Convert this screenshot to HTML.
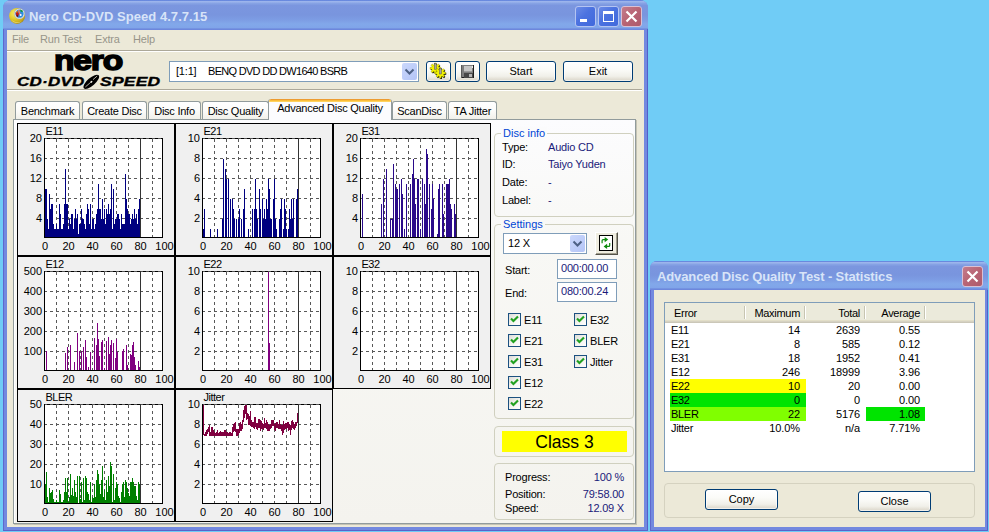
<!DOCTYPE html>
<html><head><meta charset="utf-8"><title>Nero CD-DVD Speed</title>
<style>
html,body{margin:0;padding:0}
body{width:989px;height:532px;overflow:hidden;background:#70ccf6;font-family:"Liberation Sans",sans-serif;font-size:11px;color:#000}
#root{position:relative;width:989px;height:532px;overflow:hidden;background:#70ccf6}
#root *{box-sizing:border-box}
.abs,.t,.ch{position:absolute}
.t{white-space:pre;line-height:13px;height:13px;letter-spacing:-.2px}
.ct{font-family:"Liberation Sans",sans-serif;font-size:11px;fill:#000}
/* windows */
.win{position:absolute;background:#7389df;border-radius:8px 8px 0 0;overflow:hidden}
.tb{position:absolute;left:0;top:0;right:0;height:30px;background:linear-gradient(#5f80dc 0,#6f8fe0 .8px,#9db5ec 1.400px,#96b0ea 2.200px,#86a2e4 3.500px,#7b96df 5.500px,#7995de 15px,#7d9de4 20px,#82a8ea 24px,#80a5e9 27.500px,#6f8add 29px,#6a84dc 30px)}
.ttl{position:absolute;font-family:"Liberation Sans",sans-serif;font-weight:bold;font-size:13px;color:#d8e4f8;white-space:pre;line-height:16px}
.cli{position:absolute;background:#ece9d8}
.cb{position:absolute;width:21px;height:21px;top:6px;border-radius:3px;border:1px solid #b4c4f2;background:linear-gradient(135deg,#6c8ce6 0,#4b72e0 45%,#4169dc 100%)}
.cb.x{background:linear-gradient(135deg,#c47c8c 0,#b86474 50%,#ae5a6c 100%);border-color:#d9c0d4}
.btn{position:absolute;border:1px solid #003c74;border-radius:3px;background:linear-gradient(#ffffff 0,#fbfbf8 40%,#f1f0e9 75%,#d9d4c7 100%);text-align:center;line-height:19px;font-size:11px;box-shadow:inset 0 0 0 1px rgba(255,255,255,.6)}
.tab{position:absolute;top:101px;height:19px;border:1px solid #919b9c;border-bottom:none;border-radius:3px 3px 0 0;background:linear-gradient(#ffffff 0,#fbfbf9 50%,#f0efe8 100%);text-align:center;line-height:19px;white-space:pre;letter-spacing:-.25px}
.grp{position:absolute;border:1px solid #d0d0bf;border-radius:4px}
.gl{position:absolute;color:#0046d5;background:#f6f5f0;padding:0 2px;white-space:pre;line-height:13px}
.fld{position:absolute;border:1px solid #7f9db9;background:#fff;color:#1a1a7a;white-space:pre}
.chk{position:absolute;width:13px;height:13px;border:1px solid #1c5180;background:linear-gradient(135deg,#dcdcd7 0,#f3f3ef 50%,#ffffff 100%)}
.chk svg{position:absolute;left:0;top:0}
.nv{color:#1a1a7a}
.hd{position:absolute;top:303px;height:20px;line-height:20px;white-space:pre;letter-spacing:-.3px}
.r{position:absolute;white-space:pre;line-height:14px;height:14px;text-align:right;letter-spacing:-.1px}
.l{position:absolute;white-space:pre;line-height:14px;height:14px;letter-spacing:-.3px}
</style></head>
<body>
<div id="root">

<!-- ================= MAIN WINDOW ================= -->
<div class="win" style="left:3px;top:0;width:645px;height:531px">
  <div class="tb"></div>
  <div class="abs" style="left:0;top:29px;width:1px;bottom:0;background:#6068cc"></div>
  <div class="abs" style="right:0;top:29px;width:1px;bottom:0;background:#5560c8"></div>
  <div class="abs" style="left:0;right:0;bottom:0;height:1px;background:#5a64ca"></div>
</div>
<!-- app icon -->
<svg class="abs" style="left:8px;top:7px" width="19" height="19" viewBox="0 0 19 19">
  <defs><radialGradient id="gd" cx="35%" cy="35%" r="70%"><stop offset="0" stop-color="#f6ee70"/><stop offset=".5" stop-color="#e2cc2c"/><stop offset=".85" stop-color="#c8aa1c"/><stop offset="1" stop-color="#a88c14"/></radialGradient></defs>
  <circle cx="9.100" cy="8.900" r="8" fill="url(#gd)"/>
  <path d="M3 12.500a7 7 0 0 0 11 1.500a9 9 0 0 1-11-1.500z" fill="#f0e498" opacity=".7"/>
  <circle cx="11.500" cy="6.700" r="4.700" fill="#2c8fe0" stroke="#e8e8ec" stroke-width="1.100"/>
  <circle cx="11.500" cy="6.700" r="5.300" fill="none" stroke="#9a9aa4" stroke-width=".4"/>
  <path d="M7.600 5.500L9.500 4l1.500 3-1 2.800-2-1.500z" fill="#c01818"/>
  <path d="M8.200 8.800l1.200-1 1 1.500-1 .8z" fill="#701010"/>
  <path d="M12 2.600l2.500.8.500 1.200-2 .3z" fill="#1c9a30"/>
  <path d="M10 3.200l1.200-.4L12.600 7l-1.200.5z" fill="#ff7a48"/>
  <path d="M8 5l.8-.8.800.6-.6.900z" fill="#ffd820"/>
  <circle cx="12.700" cy="7.900" r="1" fill="#fff"/>
</svg>
<div class="ttl" style="left:29px;top:9px;letter-spacing:.05px">Nero CD-DVD Speed 4.7.7.15</div>
<div class="cb" style="left:575px"><div class="abs" style="left:4px;top:12px;width:7px;height:3px;background:#fff"></div></div>
<div class="cb" style="left:598px"><div class="abs" style="left:4px;top:4px;width:11px;height:11px;border:1px solid #fff;border-top-width:3px"></div></div>
<div class="cb x" style="left:621px"><svg width="19" height="19" viewBox="0 0 19 19" class="abs" style="left:0;top:0"><path d="M4.5 4.5l10 10M14.5 4.5l-10 10" stroke="#fff" stroke-width="2.2" fill="none"/></svg></div>

<div class="cli" style="left:7px;top:30px;width:637px;height:497px"></div>
<!-- menu -->
<div class="t" style="left:12px;top:33px;color:#97958a">File</div>
<div class="t" style="left:40px;top:33px;color:#97958a">Run Test</div>
<div class="t" style="left:95px;top:33px;color:#97958a">Extra</div>
<div class="t" style="left:133px;top:33px;color:#97958a">Help</div>
<div class="abs" style="left:7px;top:50px;width:635px;height:1px;background:#aca899"></div>
<div class="abs" style="left:7px;top:51px;width:635px;height:1px;background:#fff"></div>
<div class="abs" style="left:7px;top:89px;width:635px;height:1px;background:#aca899"></div>
<div class="abs" style="left:7px;top:90px;width:635px;height:1px;background:#fff"></div>

<!-- logo -->
<div id="nero" class="abs" style="left:54px;top:46px;font-weight:bold;font-size:28px;line-height:30px;letter-spacing:-1px;-webkit-text-stroke:1.5px #000;white-space:pre;transform-origin:0 0;transform:scaleX(1.2)">nero</div>
<div class="abs" style="left:17px;top:76px;font-weight:bold;font-style:italic;font-size:12px;line-height:12px;white-space:pre;transform-origin:0 0;transform:scaleX(1.41);letter-spacing:.2px;-webkit-text-stroke:.35px #000">CD·DVD</div>
<svg class="abs" style="left:82px;top:74px" width="18" height="16" viewBox="0 0 18 16"><g transform="rotate(-41 9.300 7.800)"><ellipse cx="9.300" cy="7.800" rx="9.800" ry="3.900" fill="#000"/><ellipse cx="9.300" cy="7.800" rx="1.300" ry=".8" fill="#f4f2e6"/><path d="M1.500 7.800H7.500M12 7.300H17.500" stroke="#ece9d8" stroke-width=".7"/></g></svg>
<div class="abs" style="left:100px;top:76px;font-weight:bold;font-style:italic;font-size:12px;line-height:12px;white-space:pre;transform-origin:0 0;transform:scaleX(1.45);letter-spacing:.2px;-webkit-text-stroke:.35px #000">SPEED</div>

<!-- drive combo -->
<div class="fld" style="left:169px;top:61px;width:250px;height:21px;color:#000"></div>
<div class="t" style="left:176px;top:65px">[1:1]</div>
<div class="t" style="left:208px;top:65px;letter-spacing:-.7px">BENQ DVD DD DW1640 BSRB</div>
<div class="abs" style="left:402px;top:63px;width:15px;height:17px;border-radius:2px;background:linear-gradient(135deg,#cbd8fc,#b3c4f6)"><svg width="15" height="17" viewBox="0 0 15 17" class="abs" style="left:0;top:0"><path d="M3.5 6.5l4 4 4-4" stroke="#4d6185" stroke-width="2" fill="none"/></svg></div>
<!-- toolbar buttons -->
<div class="btn" style="left:426px;top:61px;width:25px;height:21px">
 <svg width="23" height="19" viewBox="0 0 23 19" class="abs" style="left:0;top:0">
  <path d="M11.86 5.29 L13.52 5.37 L13.52 7.23 L11.86 7.31 L11.53 8.10 L12.65 9.33 L11.33 10.65 L10.10 9.53 L9.31 9.86 L9.23 11.52 L7.37 11.52 L7.29 9.86 L6.50 9.53 L5.27 10.65 L3.95 9.33 L5.07 8.10 L4.74 7.31 L3.08 7.23 L3.08 5.37 L4.74 5.29 L5.07 4.50 L3.95 3.27 L5.27 1.95 L6.50 3.07 L7.29 2.74 L7.37 1.08 L9.23 1.08 L9.31 2.74 L10.10 3.07 L11.33 1.95 L12.65 3.27 L11.53 4.50Z" fill="#000" transform="translate(.7 .8)"/><path d="M11.86 5.29 L13.52 5.37 L13.52 7.23 L11.86 7.31 L11.53 8.10 L12.65 9.33 L11.33 10.65 L10.10 9.53 L9.31 9.86 L9.23 11.52 L7.37 11.52 L7.29 9.86 L6.50 9.53 L5.27 10.65 L3.95 9.33 L5.07 8.10 L4.74 7.31 L3.08 7.23 L3.08 5.37 L4.74 5.29 L5.07 4.50 L3.95 3.27 L5.27 1.95 L6.50 3.07 L7.29 2.74 L7.37 1.08 L9.23 1.08 L9.31 2.74 L10.10 3.07 L11.33 1.95 L12.65 3.27 L11.53 4.50Z" fill="#f2f200" stroke="#8a8a00" stroke-width=".4"/>
  <rect x="7.5" y="1.600" width="1.800" height="5.600" fill="#a4a4a4" stroke="#505050" stroke-width=".5"/>
  <path d="M16.86 9.99 L18.52 10.07 L18.52 11.93 L16.86 12.01 L16.53 12.80 L17.65 14.03 L16.33 15.35 L15.10 14.23 L14.31 14.56 L14.23 16.22 L12.37 16.22 L12.29 14.56 L11.50 14.23 L10.27 15.35 L8.95 14.03 L10.07 12.80 L9.74 12.01 L8.08 11.93 L8.08 10.07 L9.74 9.99 L10.07 9.20 L8.95 7.97 L10.27 6.65 L11.50 7.77 L12.29 7.44 L12.37 5.78 L14.23 5.78 L14.31 7.44 L15.10 7.77 L16.33 6.65 L17.65 7.97 L16.53 9.20Z" fill="#000" transform="translate(.7 .8)"/><path d="M16.86 9.99 L18.52 10.07 L18.52 11.93 L16.86 12.01 L16.53 12.80 L17.65 14.03 L16.33 15.35 L15.10 14.23 L14.31 14.56 L14.23 16.22 L12.37 16.22 L12.29 14.56 L11.50 14.23 L10.27 15.35 L8.95 14.03 L10.07 12.80 L9.74 12.01 L8.08 11.93 L8.08 10.07 L9.74 9.99 L10.07 9.20 L8.95 7.97 L10.27 6.65 L11.50 7.77 L12.29 7.44 L12.37 5.78 L14.23 5.78 L14.31 7.44 L15.10 7.77 L16.33 6.65 L17.65 7.97 L16.53 9.20Z" fill="#f2f200" stroke="#8a8a00" stroke-width=".4"/>
  <rect x="12.500" y="6.400" width="1.800" height="5.600" fill="#a4a4a4" stroke="#505050" stroke-width=".5"/>
 </svg>
</div>
<div class="btn" style="left:455px;top:61px;width:25px;height:21px">
 <svg width="23" height="19" viewBox="0 0 23 19" class="abs" style="left:0;top:0" shape-rendering="crispEdges">
  <rect x="5" y="3" width="13" height="13" fill="#7e7e7e"/><path d="M17.500 3V15.500H5.500" stroke="#1c1c1c" fill="none"/><path d="M5.500 3V16" stroke="#5a5a5a" fill="none"/>
  <rect x="8" y="4" width="7.500" height="5" fill="#c6c6c6"/><rect x="8" y="9" width="7.500" height="1" fill="#9a9a9a"/>
  <rect x="8" y="11" width="9" height="4.500" fill="#484848"/><rect x="13" y="12" width="2.500" height="3" fill="#b4b4b4"/><rect x="16" y="4" width="1" height="1.500" fill="#f0f0f0"/>
 </svg>
</div>
<div class="btn" style="left:486px;top:61px;width:70px;height:21px">Start</div>
<div class="btn" style="left:563px;top:61px;width:70px;height:21px">Exit</div>

<!-- tabs -->
<div class="tab" style="left:15px;width:65px">Benchmark</div>
<div class="tab" style="left:82px;width:65px">Create Disc</div>
<div class="tab" style="left:148px;width:53px">Disc Info</div>
<div class="tab" style="left:202px;width:67px">Disc Quality</div>
<div class="tab" style="left:392px;width:55px">ScanDisc</div>
<div class="tab" style="left:448px;width:49px">TA Jitter</div>
<!-- tab page -->
<div class="abs" style="left:13px;top:119px;width:623px;height:405px;border:1px solid #919b9c;background:linear-gradient(#fcfcfe 0,#f8f8f5 30%,#f4f3ee 100%);box-shadow:1px 1px 0 #c5c3b4, inset 1px 0 0 #fff"></div>
<div class="tab" style="left:268px;width:124px;top:99px;height:21px;border-top:none;background:#fcfcfe;line-height:19px;overflow:hidden"><div class="abs" style="left:-1px;right:-1px;top:0;height:3px;background:linear-gradient(#e68b2c 0,#ffc73c 60%,#ffdc78 100%);border-radius:3px 3px 0 0"></div>Advanced Disc Quality</div>

<svg class="ch" style="left:17px;top:123px" width="158" height="133" viewBox="0 0 158 133" shape-rendering="crispEdges">
<rect x="0.5" y="0.5" width="157" height="132" fill="#f0f0f0" stroke="#000"/>
<rect x="27" y="15" width="119" height="100" fill="#fff"/>
<path d="M39.5 16V114 M51.5 16V114 M63.5 16V114 M75.5 16V114 M87.5 16V114 M99.5 16V114 M111.5 16V114 M135.5 16V114" stroke="#585858" stroke-dasharray="3 3" fill="none"/>
<path d="M27 35.5H145 M27 55.5H145 M27 75.5H145 M27 95.5H145" stroke="#585858" stroke-dasharray="3 3" fill="none"/>
<path d="M28 66h1V115h-1zM29 66h1V115h-1zM30 96h1V115h-1zM31 106h1V115h-1zM32 71h1V115h-1zM33 86h1V115h-1zM34 81h1V115h-1zM35 81h1V115h-1zM36 101h1V115h-1zM37 106h1V115h-1zM38 106h1V115h-1zM39 101h1V115h-1zM40 106h1V115h-1zM41 106h1V115h-1zM42 81h1V115h-1zM43 91h1V115h-1zM44 106h1V115h-1zM45 106h1V115h-1zM46 101h1V115h-1zM47 81h1V115h-1zM48 46h1V115h-1zM49 81h1V115h-1zM50 81h1V115h-1zM51 106h1V115h-1zM52 96h1V115h-1zM53 101h1V115h-1zM54 91h1V115h-1zM55 91h1V115h-1zM56 106h1V115h-1zM57 96h1V115h-1zM58 86h1V115h-1zM59 96h1V115h-1zM60 91h1V115h-1zM61 111h1V115h-1zM62 101h1V115h-1zM63 101h1V115h-1zM64 86h1V115h-1zM65 96h1V115h-1zM66 96h1V115h-1zM67 101h1V115h-1zM68 106h1V115h-1zM69 91h1V115h-1zM70 81h1V115h-1zM71 86h1V115h-1zM72 101h1V115h-1zM73 81h1V115h-1zM74 106h1V115h-1zM75 96h1V115h-1zM76 96h1V115h-1zM77 106h1V115h-1zM78 101h1V115h-1zM79 91h1V115h-1zM80 86h1V115h-1zM81 61h1V115h-1zM82 86h1V115h-1zM83 86h1V115h-1zM84 96h1V115h-1zM85 76h1V115h-1zM86 96h1V115h-1zM87 86h1V115h-1zM88 101h1V115h-1zM89 86h1V115h-1zM90 91h1V115h-1zM91 81h1V115h-1zM92 91h1V115h-1zM93 86h1V115h-1zM94 61h1V115h-1zM95 106h1V115h-1zM96 66h1V115h-1zM97 101h1V115h-1zM98 96h1V115h-1zM99 96h1V115h-1zM100 91h1V115h-1zM101 91h1V115h-1zM102 96h1V115h-1zM103 106h1V115h-1zM104 91h1V115h-1zM105 101h1V115h-1zM106 101h1V115h-1zM107 101h1V115h-1zM108 51h1V115h-1zM109 76h1V115h-1zM110 86h1V115h-1zM111 91h1V115h-1zM112 91h1V115h-1zM113 101h1V115h-1zM114 96h1V115h-1zM115 91h1V115h-1zM116 96h1V115h-1zM117 86h1V115h-1zM118 96h1V115h-1zM119 91h1V115h-1zM120 101h1V115h-1zM121 86h1V115h-1zM122 76h1V115h-1zM123 76h1V115h-1z" fill="#000080"/>
<path d="M27.5 15V115M145.5 15V115M27 114.5H146" stroke="#000" fill="none"/>
<path d="M27 15.5H146" stroke="#000" fill="none"/><path d="M27 15.5H145" stroke="#555" stroke-dasharray="3 3" fill="none"/><path d="M27 15.5H28" stroke="#000" fill="none"/>
<path d="M123.5 15V114" stroke="#333" fill="none"/>
<text x="28.5" y="12" class="ct" letter-spacing="-.5">E11</text>
<text x="25" y="19" text-anchor="end" class="ct">20</text>
<text x="25" y="39" text-anchor="end" class="ct">16</text>
<text x="25" y="59" text-anchor="end" class="ct">12</text>
<text x="25" y="79" text-anchor="end" class="ct">8</text>
<text x="25" y="99" text-anchor="end" class="ct">4</text>
<text x="28.0" y="127" text-anchor="middle" class="ct">0</text>
<text x="51.5" y="127" text-anchor="middle" class="ct">20</text>
<text x="75.5" y="127" text-anchor="middle" class="ct">40</text>
<text x="99.5" y="127" text-anchor="middle" class="ct">60</text>
<text x="123.5" y="127" text-anchor="middle" class="ct">80</text>
<text x="147.5" y="127" text-anchor="middle" class="ct">100</text>
</svg>
<svg class="ch" style="left:175px;top:123px" width="158" height="133" viewBox="0 0 158 133" shape-rendering="crispEdges">
<rect x="0.5" y="0.5" width="157" height="132" fill="#f0f0f0" stroke="#000"/>
<rect x="27" y="15" width="119" height="100" fill="#fff"/>
<path d="M39.5 16V114 M51.5 16V114 M63.5 16V114 M75.5 16V114 M87.5 16V114 M99.5 16V114 M111.5 16V114 M135.5 16V114" stroke="#585858" stroke-dasharray="3 3" fill="none"/>
<path d="M27 35.5H145 M27 55.5H145 M27 75.5H145 M27 95.5H145" stroke="#585858" stroke-dasharray="3 3" fill="none"/>
<path d="M28 106h1V115h-1zM29 86h1V115h-1zM35 106h1V115h-1zM42 106h1V115h-1zM47 96h1V115h-1zM48 36h1V115h-1zM50 46h1V115h-1zM51 56h1V115h-1zM53 56h1V115h-1zM55 76h1V115h-1zM57 76h1V115h-1zM58 86h1V115h-1zM59 96h1V115h-1zM61 96h1V115h-1zM63 96h1V115h-1zM64 86h1V115h-1zM66 96h1V115h-1zM68 86h1V115h-1zM69 66h1V115h-1zM73 106h1V115h-1zM77 86h1V115h-1zM79 86h1V115h-1zM80 56h1V115h-1zM81 86h1V115h-1zM82 96h1V115h-1zM84 66h1V115h-1zM85 86h1V115h-1zM87 76h1V115h-1zM88 96h1V115h-1zM89 86h1V115h-1zM90 96h1V115h-1zM91 76h1V115h-1zM92 86h1V115h-1zM93 56h1V115h-1zM94 66h1V115h-1zM95 96h1V115h-1zM96 96h1V115h-1zM98 76h1V115h-1zM99 56h1V115h-1zM100 96h1V115h-1zM101 106h1V115h-1zM104 96h1V115h-1zM105 86h1V115h-1zM106 76h1V115h-1zM108 106h1V115h-1zM109 76h1V115h-1zM110 86h1V115h-1zM111 106h1V115h-1zM113 106h1V115h-1zM114 86h1V115h-1zM115 96h1V115h-1zM116 76h1V115h-1zM117 96h1V115h-1zM118 76h1V115h-1zM121 76h1V115h-1zM122 66h1V115h-1zM123 106h1V115h-1z" fill="#000080"/>
<path d="M27.5 15V115M145.5 15V115M27 114.5H146" stroke="#000" fill="none"/>
<path d="M27 15.5H146" stroke="#000" fill="none"/><path d="M27 15.5H145" stroke="#555" stroke-dasharray="3 3" fill="none"/><path d="M27 15.5H28" stroke="#000" fill="none"/>
<path d="M123.5 15V114" stroke="#333" fill="none"/>
<text x="28.5" y="12" class="ct" letter-spacing="-.5">E21</text>
<text x="25" y="19" text-anchor="end" class="ct">10</text>
<text x="25" y="39" text-anchor="end" class="ct">8</text>
<text x="25" y="59" text-anchor="end" class="ct">6</text>
<text x="25" y="79" text-anchor="end" class="ct">4</text>
<text x="25" y="99" text-anchor="end" class="ct">2</text>
<text x="28.0" y="127" text-anchor="middle" class="ct">0</text>
<text x="51.5" y="127" text-anchor="middle" class="ct">20</text>
<text x="75.5" y="127" text-anchor="middle" class="ct">40</text>
<text x="99.5" y="127" text-anchor="middle" class="ct">60</text>
<text x="123.5" y="127" text-anchor="middle" class="ct">80</text>
<text x="147.5" y="127" text-anchor="middle" class="ct">100</text>
</svg>
<svg class="ch" style="left:333px;top:123px" width="158" height="133" viewBox="0 0 158 133" shape-rendering="crispEdges">
<rect x="0.5" y="0.5" width="157" height="132" fill="#f0f0f0" stroke="#000"/>
<rect x="27" y="15" width="119" height="100" fill="#fff"/>
<path d="M39.5 16V114 M51.5 16V114 M63.5 16V114 M75.5 16V114 M87.5 16V114 M99.5 16V114 M111.5 16V114 M135.5 16V114" stroke="#585858" stroke-dasharray="3 3" fill="none"/>
<path d="M27 35.5H145 M27 55.5H145 M27 75.5H145 M27 95.5H145" stroke="#585858" stroke-dasharray="3 3" fill="none"/>
<path d="M29 71h1V115h-1zM48 81h1V115h-1zM50 56h1V115h-1zM53 46h1V115h-1zM57 96h1V115h-1zM59 96h1V115h-1zM60 41h1V115h-1zM62 61h1V115h-1zM63 66h1V115h-1zM64 66h1V115h-1zM66 61h1V115h-1zM68 56h1V115h-1zM69 71h1V115h-1zM71 106h1V115h-1zM73 61h1V115h-1zM77 61h1V115h-1zM79 51h1V115h-1zM80 36h1V115h-1zM81 56h1V115h-1zM82 81h1V115h-1zM84 56h1V115h-1zM85 56h1V115h-1zM87 106h1V115h-1zM89 56h1V115h-1zM91 61h1V115h-1zM92 81h1V115h-1zM93 26h1V115h-1zM94 31h1V115h-1zM96 61h1V115h-1zM98 86h1V115h-1zM99 61h1V115h-1zM100 76h1V115h-1zM104 111h1V115h-1zM105 66h1V115h-1zM106 61h1V115h-1zM109 61h1V115h-1zM110 91h1V115h-1zM113 61h1V115h-1zM114 61h1V115h-1zM115 61h1V115h-1zM116 56h1V115h-1zM117 81h1V115h-1zM118 86h1V115h-1zM121 81h1V115h-1zM122 91h1V115h-1zM57 96h3v1h-3z" fill="#2a0a8a"/>
<path d="M27.5 15V115M145.5 15V115M27 114.5H146" stroke="#000" fill="none"/>
<path d="M27 15.5H146" stroke="#000" fill="none"/><path d="M27 15.5H145" stroke="#555" stroke-dasharray="3 3" fill="none"/><path d="M27 15.5H28" stroke="#000" fill="none"/>
<path d="M123.5 15V114" stroke="#333" fill="none"/>
<text x="28.5" y="12" class="ct" letter-spacing="-.5">E31</text>
<text x="25" y="19" text-anchor="end" class="ct">20</text>
<text x="25" y="39" text-anchor="end" class="ct">16</text>
<text x="25" y="59" text-anchor="end" class="ct">12</text>
<text x="25" y="79" text-anchor="end" class="ct">8</text>
<text x="25" y="99" text-anchor="end" class="ct">4</text>
<text x="28.0" y="127" text-anchor="middle" class="ct">0</text>
<text x="51.5" y="127" text-anchor="middle" class="ct">20</text>
<text x="75.5" y="127" text-anchor="middle" class="ct">40</text>
<text x="99.5" y="127" text-anchor="middle" class="ct">60</text>
<text x="123.5" y="127" text-anchor="middle" class="ct">80</text>
<text x="147.5" y="127" text-anchor="middle" class="ct">100</text>
</svg>
<svg class="ch" style="left:17px;top:256px" width="158" height="133" viewBox="0 0 158 133" shape-rendering="crispEdges">
<rect x="0.5" y="0.5" width="157" height="132" fill="#f0f0f0" stroke="#000"/>
<rect x="27" y="15" width="119" height="100" fill="#fff"/>
<path d="M39.5 16V114 M51.5 16V114 M63.5 16V114 M75.5 16V114 M87.5 16V114 M99.5 16V114 M111.5 16V114 M135.5 16V114" stroke="#585858" stroke-dasharray="3 3" fill="none"/>
<path d="M27 35.5H145 M27 55.5H145 M27 75.5H145 M27 95.5H145" stroke="#585858" stroke-dasharray="3 3" fill="none"/>
<path d="M29 95h1V115h-1zM48 97h1V115h-1zM50 91h1V115h-1zM53 89h1V115h-1zM57 106h1V115h-1zM60 77h1V115h-1zM62 95h1V115h-1zM64 95h1V115h-1zM66 91h1V115h-1zM68 84h1V115h-1zM69 101h1V115h-1zM71 111h1V115h-1zM73 96h1V115h-1zM77 82h1V115h-1zM79 89h1V115h-1zM80 67h1V115h-1zM81 83h1V115h-1zM82 100h1V115h-1zM84 86h1V115h-1zM85 84h1V115h-1zM87 112h1V115h-1zM89 85h1V115h-1zM91 81h1V115h-1zM92 98h1V115h-1zM93 89h1V115h-1zM94 84h1V115h-1zM96 87h1V115h-1zM98 102h1V115h-1zM99 83h1V115h-1zM100 96h1V115h-1zM105 95h1V115h-1zM106 93h1V115h-1zM109 89h1V115h-1zM110 109h1V115h-1zM113 98h1V115h-1zM114 99h1V115h-1zM115 89h1V115h-1zM116 86h1V115h-1zM117 101h1V115h-1zM118 109h1V115h-1zM121 105h1V115h-1zM122 111h1V115h-1z" fill="#800080"/>
<path d="M27.5 15V115M145.5 15V115M27 114.5H146" stroke="#000" fill="none"/>
<path d="M27 15.5H146" stroke="#000" fill="none"/><path d="M27 15.5H145" stroke="#555" stroke-dasharray="3 3" fill="none"/><path d="M27 15.5H28" stroke="#000" fill="none"/>
<path d="M123.5 15V114" stroke="#333" fill="none"/>
<text x="28.5" y="12" class="ct" letter-spacing="-.5">E12</text>
<text x="25" y="19" text-anchor="end" class="ct">500</text>
<text x="25" y="39" text-anchor="end" class="ct">400</text>
<text x="25" y="59" text-anchor="end" class="ct">300</text>
<text x="25" y="79" text-anchor="end" class="ct">200</text>
<text x="25" y="99" text-anchor="end" class="ct">100</text>
<text x="28.0" y="127" text-anchor="middle" class="ct">0</text>
<text x="51.5" y="127" text-anchor="middle" class="ct">20</text>
<text x="75.5" y="127" text-anchor="middle" class="ct">40</text>
<text x="99.5" y="127" text-anchor="middle" class="ct">60</text>
<text x="123.5" y="127" text-anchor="middle" class="ct">80</text>
<text x="147.5" y="127" text-anchor="middle" class="ct">100</text>
</svg>
<svg class="ch" style="left:175px;top:256px" width="158" height="133" viewBox="0 0 158 133" shape-rendering="crispEdges">
<rect x="0.5" y="0.5" width="157" height="132" fill="#f0f0f0" stroke="#000"/>
<rect x="27" y="15" width="119" height="100" fill="#fff"/>
<path d="M39.5 16V114 M51.5 16V114 M63.5 16V114 M75.5 16V114 M87.5 16V114 M99.5 16V114 M111.5 16V114 M135.5 16V114" stroke="#585858" stroke-dasharray="3 3" fill="none"/>
<path d="M27 35.5H145 M27 55.5H145 M27 75.5H145 M27 95.5H145" stroke="#585858" stroke-dasharray="3 3" fill="none"/>
<path d="M93 15h1V115h-1zM94 87h1V115h-1z" fill="#800080"/>
<path d="M27.5 15V115M145.5 15V115M27 114.5H146" stroke="#000" fill="none"/>
<path d="M27 15.5H146" stroke="#000" fill="none"/><path d="M27 15.5H145" stroke="#555" stroke-dasharray="3 3" fill="none"/><path d="M27 15.5H28" stroke="#000" fill="none"/>
<path d="M123.5 15V114" stroke="#333" fill="none"/>
<text x="28.5" y="12" class="ct" letter-spacing="-.5">E22</text>
<text x="25" y="19" text-anchor="end" class="ct">10</text>
<text x="25" y="39" text-anchor="end" class="ct">8</text>
<text x="25" y="59" text-anchor="end" class="ct">6</text>
<text x="25" y="79" text-anchor="end" class="ct">4</text>
<text x="25" y="99" text-anchor="end" class="ct">2</text>
<text x="28.0" y="127" text-anchor="middle" class="ct">0</text>
<text x="51.5" y="127" text-anchor="middle" class="ct">20</text>
<text x="75.5" y="127" text-anchor="middle" class="ct">40</text>
<text x="99.5" y="127" text-anchor="middle" class="ct">60</text>
<text x="123.5" y="127" text-anchor="middle" class="ct">80</text>
<text x="147.5" y="127" text-anchor="middle" class="ct">100</text>
</svg>
<svg class="ch" style="left:333px;top:256px" width="158" height="133" viewBox="0 0 158 133" shape-rendering="crispEdges">
<rect x="0.5" y="0.5" width="157" height="132" fill="#f0f0f0" stroke="#000"/>
<rect x="27" y="15" width="119" height="100" fill="#fff"/>
<path d="M39.5 16V114 M51.5 16V114 M63.5 16V114 M75.5 16V114 M87.5 16V114 M99.5 16V114 M111.5 16V114 M135.5 16V114" stroke="#585858" stroke-dasharray="3 3" fill="none"/>
<path d="M27 35.5H145 M27 55.5H145 M27 75.5H145 M27 95.5H145" stroke="#585858" stroke-dasharray="3 3" fill="none"/>
<path d="" fill="#800080"/>
<path d="M27.5 15V115M145.5 15V115M27 114.5H146" stroke="#000" fill="none"/>
<path d="M27 15.5H146" stroke="#000" fill="none"/><path d="M27 15.5H145" stroke="#555" stroke-dasharray="3 3" fill="none"/><path d="M27 15.5H28" stroke="#000" fill="none"/>
<path d="M123.5 15V114" stroke="#333" fill="none"/>
<text x="28.5" y="12" class="ct" letter-spacing="-.5">E32</text>
<text x="25" y="19" text-anchor="end" class="ct">10</text>
<text x="25" y="39" text-anchor="end" class="ct">8</text>
<text x="25" y="59" text-anchor="end" class="ct">6</text>
<text x="25" y="79" text-anchor="end" class="ct">4</text>
<text x="25" y="99" text-anchor="end" class="ct">2</text>
<text x="28.0" y="127" text-anchor="middle" class="ct">0</text>
<text x="51.5" y="127" text-anchor="middle" class="ct">20</text>
<text x="75.5" y="127" text-anchor="middle" class="ct">40</text>
<text x="99.5" y="127" text-anchor="middle" class="ct">60</text>
<text x="123.5" y="127" text-anchor="middle" class="ct">80</text>
<text x="147.5" y="127" text-anchor="middle" class="ct">100</text>
</svg>
<svg class="ch" style="left:17px;top:389px" width="158" height="133" viewBox="0 0 158 133" shape-rendering="crispEdges">
<rect x="0.5" y="0.5" width="157" height="132" fill="#f0f0f0" stroke="#000"/>
<rect x="27" y="15" width="119" height="100" fill="#fff"/>
<path d="M39.5 16V114 M51.5 16V114 M63.5 16V114 M75.5 16V114 M87.5 16V114 M99.5 16V114 M111.5 16V114 M135.5 16V114" stroke="#585858" stroke-dasharray="3 3" fill="none"/>
<path d="M27 35.5H145 M27 55.5H145 M27 75.5H145 M27 95.5H145" stroke="#585858" stroke-dasharray="3 3" fill="none"/>
<path d="M28 95h1V115h-1zM29 83h1V115h-1zM30 108h1V115h-1zM31 113h1V115h-1zM32 99h1V115h-1zM33 104h1V115h-1zM34 103h1V115h-1zM35 101h1V115h-1zM36 110h1V115h-1zM37 113h1V115h-1zM38 113h1V115h-1zM39 111h1V115h-1zM40 113h1V115h-1zM41 113h1V115h-1zM42 101h1V115h-1zM43 105h1V115h-1zM44 113h1V115h-1zM45 113h1V115h-1zM46 111h1V115h-1zM47 103h1V115h-1zM48 89h1V115h-1zM49 103h1V115h-1zM50 89h1V115h-1zM51 113h1V115h-1zM52 108h1V115h-1zM53 85h1V115h-1zM54 106h1V115h-1zM55 99h1V115h-1zM56 107h1V115h-1zM57 91h1V115h-1zM58 103h1V115h-1zM59 108h1V115h-1zM60 87h1V115h-1zM62 87h1V115h-1zM63 110h1V115h-1zM64 93h1V115h-1zM65 113h1V115h-1zM66 89h1V115h-1zM67 111h1V115h-1zM68 87h1V115h-1zM69 89h1V115h-1zM70 103h1V115h-1zM71 105h1V115h-1zM72 111h1V115h-1zM73 93h1V115h-1zM74 113h1V115h-1zM75 108h1V115h-1zM76 109h1V115h-1zM77 95h1V115h-1zM78 108h1V115h-1zM79 91h1V115h-1zM80 81h1V115h-1zM81 85h1V115h-1zM82 95h1V115h-1zM83 105h1V115h-1zM84 91h1V115h-1zM85 77h1V115h-1zM86 108h1V115h-1zM87 101h1V115h-1zM88 111h1V115h-1zM89 91h1V115h-1zM90 103h1V115h-1zM91 87h1V115h-1zM92 97h1V115h-1zM93 73h1V115h-1zM94 77h1V115h-1zM95 113h1V115h-1zM96 85h1V115h-1zM97 111h1V115h-1zM98 99h1V115h-1zM99 93h1V115h-1zM100 95h1V115h-1zM101 107h1V115h-1zM102 109h1V115h-1zM103 113h1V115h-1zM104 103h1V115h-1zM105 95h1V115h-1zM106 93h1V115h-1zM107 108h1V115h-1zM108 91h1V115h-1zM109 93h1V115h-1zM110 99h1V115h-1zM111 104h1V115h-1zM112 107h1V115h-1zM113 93h1V115h-1zM114 93h1V115h-1zM115 89h1V115h-1zM116 93h1V115h-1zM117 97h1V115h-1zM118 97h1V115h-1zM119 107h1V115h-1zM120 111h1V115h-1zM121 93h1V115h-1zM122 95h1V115h-1zM123 95h1V115h-1z" fill="#008000"/>
<path d="M27.5 15V115M145.5 15V115M27 114.5H146" stroke="#000" fill="none"/>
<path d="M27 15.5H146" stroke="#000" fill="none"/><path d="M27 15.5H145" stroke="#555" stroke-dasharray="3 3" fill="none"/><path d="M27 15.5H28" stroke="#000" fill="none"/>
<path d="M123.5 15V114" stroke="#333" fill="none"/>
<text x="28.5" y="12" class="ct" letter-spacing="-.5">BLER</text>
<text x="25" y="19" text-anchor="end" class="ct">50</text>
<text x="25" y="39" text-anchor="end" class="ct">40</text>
<text x="25" y="59" text-anchor="end" class="ct">30</text>
<text x="25" y="79" text-anchor="end" class="ct">20</text>
<text x="25" y="99" text-anchor="end" class="ct">10</text>
<text x="28.0" y="127" text-anchor="middle" class="ct">0</text>
<text x="51.5" y="127" text-anchor="middle" class="ct">20</text>
<text x="75.5" y="127" text-anchor="middle" class="ct">40</text>
<text x="99.5" y="127" text-anchor="middle" class="ct">60</text>
<text x="123.5" y="127" text-anchor="middle" class="ct">80</text>
<text x="147.5" y="127" text-anchor="middle" class="ct">100</text>
</svg>
<svg class="ch" style="left:175px;top:389px" width="158" height="133" viewBox="0 0 158 133" shape-rendering="crispEdges">
<rect x="0.5" y="0.5" width="157" height="132" fill="#f0f0f0" stroke="#000"/>
<rect x="27" y="15" width="119" height="100" fill="#fff"/>
<path d="M39.5 16V114 M51.5 16V114 M63.5 16V114 M75.5 16V114 M87.5 16V114 M99.5 16V114 M111.5 16V114 M135.5 16V114" stroke="#585858" stroke-dasharray="3 3" fill="none"/>
<path d="M27 35.5H145 M27 55.5H145 M27 75.5H145 M27 95.5H145" stroke="#585858" stroke-dasharray="3 3" fill="none"/>
<path d="M28 15h1V46h-1zM29 45h1V47h-1zM30 43h1V47h-1zM31 41h1V47h-1zM32 40h1V45h-1zM33 38h1V43h-1zM34 36h1V47h-1zM35 43h1V47h-1zM36 38h1V47h-1zM37 38h1V47h-1zM38 41h1V47h-1zM39 43h1V47h-1zM40 44h1V47h-1zM41 43h1V47h-1zM42 41h1V47h-1zM43 44h1V47h-1zM44 43h1V47h-1zM45 42h1V47h-1zM46 43h1V47h-1zM47 43h1V47h-1zM48 43h1V47h-1zM49 41h1V47h-1zM50 41h1V47h-1zM51 43h1V47h-1zM52 43h1V47h-1zM53 44h1V47h-1zM54 43h1V47h-1zM55 43h1V47h-1zM56 44h1V47h-1zM57 38h1V47h-1zM58 35h1V43h-1zM59 34h1V42h-1zM60 33h1V43h-1zM61 40h1V47h-1zM62 40h1V47h-1zM63 40h1V46h-1zM64 34h1V44h-1zM65 33h1V42h-1zM66 35h1V42h-1zM67 31h1V40h-1zM68 21h1V33h-1zM69 17h1V29h-1zM70 16h1V25h-1zM71 16h1V31h-1zM72 24h1V30h-1zM73 25h1V36h-1zM74 27h1V36h-1zM75 22h1V37h-1zM76 31h1V38h-1zM77 33h1V38h-1zM78 33h1V39h-1zM79 28h1V40h-1zM80 28h1V38h-1zM81 34h1V40h-1zM82 34h1V41h-1zM83 30h1V39h-1zM84 30h1V39h-1zM85 31h1V42h-1zM86 32h1V40h-1zM87 34h1V40h-1zM88 35h1V41h-1zM89 29h1V39h-1zM90 34h1V39h-1zM91 31h1V40h-1zM92 33h1V42h-1zM93 35h1V42h-1zM94 36h1V42h-1zM95 35h1V40h-1zM96 31h1V39h-1zM97 31h1V37h-1zM98 31h1V37h-1zM99 35h1V41h-1zM100 34h1V42h-1zM101 33h1V39h-1zM102 33h1V39h-1zM103 35h1V40h-1zM104 31h1V40h-1zM105 35h1V40h-1zM106 36h1V42h-1zM107 36h1V46h-1zM108 32h1V44h-1zM109 35h1V41h-1zM110 34h1V40h-1zM111 34h1V40h-1zM112 33h1V39h-1zM113 33h1V42h-1zM114 35h1V41h-1zM115 36h1V46h-1zM116 32h1V41h-1zM117 31h1V39h-1zM118 33h1V40h-1zM119 35h1V41h-1zM120 33h1V39h-1zM121 33h1V37h-1zM122 24h1V34h-1zM123 28h1V30h-1z" fill="#800040"/>
<path d="M27.5 15V115M145.5 15V115M27 114.5H146" stroke="#000" fill="none"/>
<path d="M27 15.5H146" stroke="#000" fill="none"/><path d="M27 15.5H145" stroke="#555" stroke-dasharray="3 3" fill="none"/><path d="M27 15.5H28" stroke="#000" fill="none"/>
<path d="M123.5 15V114" stroke="#333" fill="none"/>
<text x="28.5" y="12" class="ct" letter-spacing="-.5">Jitter</text>
<text x="25" y="19" text-anchor="end" class="ct">10</text>
<text x="25" y="39" text-anchor="end" class="ct">8</text>
<text x="25" y="59" text-anchor="end" class="ct">6</text>
<text x="25" y="79" text-anchor="end" class="ct">4</text>
<text x="25" y="99" text-anchor="end" class="ct">2</text>
<text x="28.0" y="127" text-anchor="middle" class="ct">0</text>
<text x="51.5" y="127" text-anchor="middle" class="ct">20</text>
<text x="75.5" y="127" text-anchor="middle" class="ct">40</text>
<text x="99.5" y="127" text-anchor="middle" class="ct">60</text>
<text x="123.5" y="127" text-anchor="middle" class="ct">80</text>
<text x="147.5" y="127" text-anchor="middle" class="ct">100</text>
</svg>

<!-- Disc info -->
<div class="grp" style="left:494px;top:133px;width:140px;height:84px"></div>
<div class="gl" style="left:501px;top:127px;background:#fbfbfc">Disc info</div>
<div class="t" style="left:502px;top:141px">Type:</div><div class="t nv" style="left:548px;top:141px">Audio CD</div>
<div class="t" style="left:502px;top:158px">ID:</div><div class="t nv" style="left:548px;top:158px">Taiyo Yuden</div>
<div class="t" style="left:502px;top:176px">Date:</div><div class="t nv" style="left:548px;top:176px">-</div>
<div class="t" style="left:502px;top:194px">Label:</div><div class="t nv" style="left:548px;top:194px">-</div>

<!-- Settings -->
<div class="grp" style="left:494px;top:224px;width:140px;height:195px"></div>
<div class="gl" style="left:501px;top:218px;background:#f9f9f7">Settings</div>
<div class="fld" style="left:503px;top:233px;width:84px;height:21px"></div>
<div class="t" style="left:508px;top:237px">12 X</div>
<div class="abs" style="left:570px;top:235px;width:15px;height:17px;border-radius:2px;background:linear-gradient(135deg,#cbd8fc,#b3c4f6)"><svg width="15" height="17" viewBox="0 0 15 17" class="abs" style="left:0;top:0"><path d="M3.5 6.5l4 4 4-4" stroke="#4d6185" stroke-width="2" fill="none"/></svg></div>
<div class="abs" style="left:595px;top:232px;width:23px;height:23px;background:#efede0;border:1px solid;border-color:#fff #55534a #55534a #fff;box-shadow:inset -1px -1px 0 #a09d8c">
  <div class="abs" style="left:3px;top:2px;width:14px;height:16px;border:1px solid #000;background:#fff">
   <svg width="12" height="14" viewBox="0 0 12 14" class="abs" style="left:0;top:0"><path d="M2.100 7.200V4.600q0-1 1-1h2" stroke="#0c8a0c" stroke-width="1.200" fill="none"/><path d="M4.700 1L8.200 3.600 4.700 6.200z" fill="#0c8a0c"/><path d="M9.700 7v2.400q0 1-1 1h-2" stroke="#0c8a0c" stroke-width="1.200" fill="none"/><path d="M7.100 7.800L3.600 10.400 7.100 13z" fill="#0c8a0c"/></svg>
  </div>
</div>
<div class="t" style="left:505px;top:264px">Start:</div>
<div class="fld" style="left:557px;top:259px;width:60px;height:20px"></div><div class="t nv" style="left:561px;top:262px">000:00.00</div>
<div class="t" style="left:505px;top:287px">End:</div>
<div class="fld" style="left:557px;top:282px;width:60px;height:20px"></div><div class="t nv" style="left:561px;top:285px">080:00.24</div>

<div class="chk" style="left:508px;top:313px"><svg width="11" height="11" viewBox="0 0 11 11"><path d="M2 4.6l2.400 2.500L9 2.400" stroke="#21a121" stroke-width="2.100" fill="none"/></svg></div><div class="t" style="left:524px;top:314px">E11</div>
<div class="chk" style="left:508px;top:334px"><svg width="11" height="11" viewBox="0 0 11 11"><path d="M2 4.6l2.400 2.500L9 2.400" stroke="#21a121" stroke-width="2.100" fill="none"/></svg></div><div class="t" style="left:524px;top:335px">E21</div>
<div class="chk" style="left:508px;top:355px"><svg width="11" height="11" viewBox="0 0 11 11"><path d="M2 4.6l2.400 2.500L9 2.400" stroke="#21a121" stroke-width="2.100" fill="none"/></svg></div><div class="t" style="left:524px;top:356px">E31</div>
<div class="chk" style="left:508px;top:376px"><svg width="11" height="11" viewBox="0 0 11 11"><path d="M2 4.6l2.400 2.500L9 2.400" stroke="#21a121" stroke-width="2.100" fill="none"/></svg></div><div class="t" style="left:524px;top:377px">E12</div>
<div class="chk" style="left:508px;top:397px"><svg width="11" height="11" viewBox="0 0 11 11"><path d="M2 4.6l2.400 2.500L9 2.400" stroke="#21a121" stroke-width="2.100" fill="none"/></svg></div><div class="t" style="left:524px;top:398px">E22</div>
<div class="chk" style="left:574px;top:313px"><svg width="11" height="11" viewBox="0 0 11 11"><path d="M2 4.6l2.400 2.500L9 2.400" stroke="#21a121" stroke-width="2.100" fill="none"/></svg></div><div class="t" style="left:590px;top:314px">E32</div>
<div class="chk" style="left:574px;top:334px"><svg width="11" height="11" viewBox="0 0 11 11"><path d="M2 4.6l2.400 2.500L9 2.400" stroke="#21a121" stroke-width="2.100" fill="none"/></svg></div><div class="t" style="left:590px;top:335px">BLER</div>
<div class="chk" style="left:574px;top:355px"><svg width="11" height="11" viewBox="0 0 11 11"><path d="M2 4.6l2.400 2.500L9 2.400" stroke="#21a121" stroke-width="2.100" fill="none"/></svg></div><div class="t" style="left:590px;top:356px">Jitter</div>

<!-- Class -->
<div class="grp" style="left:494px;top:426px;width:140px;height:31px"></div>
<div class="abs" style="left:502px;top:431px;width:125px;height:21px;background:#ffff00;text-align:center;font-size:17.5px;line-height:23px;white-space:pre;overflow:hidden">Class 3</div>

<!-- Progress -->
<div class="grp" style="left:494px;top:463px;width:140px;height:57px"></div>
<div class="t" style="left:505px;top:471px">Progress:</div><div class="t nv" style="left:544px;top:471px;width:80px;text-align:right">100 %</div>
<div class="t" style="left:505px;top:488px">Position:</div><div class="t nv" style="left:544px;top:488px;width:80px;text-align:right">79:58.00</div>
<div class="t" style="left:505px;top:502px">Speed:</div><div class="t nv" style="left:544px;top:502px;width:80px;text-align:right">12.09 X</div>

<!-- ================= STATISTICS DIALOG ================= -->
<div class="win" style="left:650px;top:261px;width:338px;height:270px;border-radius:7px 7px 0 0">
  <div class="tb" style="height:29px;background:linear-gradient(#5f80dc 0,#6f8fe0 .8px,#9db5ec 1.400px,#96b0ea 2.200px,#86a2e4 3.500px,#7b96df 5.500px,#7995de 14px,#7d9de4 19px,#82a8ea 23px,#80a5e9 26.500px,#6f8add 28px,#6a84dc 29px)"></div>
  <div class="abs" style="left:0;top:29px;width:1px;bottom:0;background:#6068cc"></div>
  <div class="abs" style="right:0;top:29px;width:1px;bottom:0;background:#5560c8"></div>
  <div class="abs" style="left:0;right:0;bottom:0;height:1px;background:#5a64ca"></div>
</div>
<div class="ttl" style="left:657px;top:269px;letter-spacing:-.11px">Advanced Disc Quality Test - Statistics</div>
<div class="cb x" style="left:962px;top:266px"><svg width="19" height="19" viewBox="0 0 19 19" class="abs" style="left:0;top:0"><path d="M4.5 4.5l10 10M14.5 4.500l-10 10" stroke="#fff" stroke-width="2.2" fill="none"/></svg></div>
<div class="cli" style="left:654px;top:290px;width:331px;height:237px"></div>

<!-- list -->
<div class="abs" style="left:664px;top:302px;width:311px;height:170px;border:1px solid #7f9db9;background:#fff"></div>
<div class="abs" style="left:665px;top:303px;width:309px;height:20px;background:#ebeadb;border-bottom:1px solid #cbc7b8;box-shadow:inset 0 -1px 0 #d6d2c2, inset 0 -2px 0 #e2dec8"></div>
<div class="abs" style="left:744px;top:306px;width:1px;height:13px;background:#c7c5b2;box-shadow:1px 0 0 #fff"></div>
<div class="abs" style="left:804px;top:306px;width:1px;height:13px;background:#c7c5b2;box-shadow:1px 0 0 #fff"></div>
<div class="abs" style="left:864px;top:306px;width:1px;height:13px;background:#c7c5b2;box-shadow:1px 0 0 #fff"></div>
<div class="abs" style="left:924px;top:306px;width:1px;height:13px;background:#c7c5b2;box-shadow:1px 0 0 #fff"></div>
<div class="hd" style="left:674px">Error</div>
<div class="hd" style="left:700px;width:100px;text-align:right">Maximum</div>
<div class="hd" style="left:760px;width:100px;text-align:right">Total</div>
<div class="hd" style="left:820px;width:100px;text-align:right">Average</div>
<div class="abs" style="left:670px;top:379px;width:136px;height:14px;background:#ffff00"></div>
<div class="abs" style="left:670px;top:393px;width:136px;height:14px;background:#00e400"></div>
<div class="abs" style="left:670px;top:407px;width:136px;height:14px;background:#80ff00"></div>
<div class="abs" style="left:866px;top:407px;width:59px;height:14px;background:#00e400"></div>
<div class="l" style="left:671px;top:323px">E11</div><div class="r" style="left:700px;width:100px;top:323px">14</div><div class="r" style="left:760px;width:100px;top:323px">2639</div><div class="r" style="left:820px;width:100px;top:323px">0.55</div>
<div class="l" style="left:671px;top:337px">E21</div><div class="r" style="left:700px;width:100px;top:337px">8</div><div class="r" style="left:760px;width:100px;top:337px">585</div><div class="r" style="left:820px;width:100px;top:337px">0.12</div>
<div class="l" style="left:671px;top:351px">E31</div><div class="r" style="left:700px;width:100px;top:351px">18</div><div class="r" style="left:760px;width:100px;top:351px">1952</div><div class="r" style="left:820px;width:100px;top:351px">0.41</div>
<div class="l" style="left:671px;top:365px">E12</div><div class="r" style="left:700px;width:100px;top:365px">246</div><div class="r" style="left:760px;width:100px;top:365px">18999</div><div class="r" style="left:820px;width:100px;top:365px">3.96</div>
<div class="l" style="left:671px;top:379px">E22</div><div class="r" style="left:700px;width:100px;top:379px">10</div><div class="r" style="left:760px;width:100px;top:379px">20</div><div class="r" style="left:820px;width:100px;top:379px">0.00</div>
<div class="l" style="left:671px;top:393px">E32</div><div class="r" style="left:700px;width:100px;top:393px">0</div><div class="r" style="left:760px;width:100px;top:393px">0</div><div class="r" style="left:820px;width:100px;top:393px">0.00</div>
<div class="l" style="left:671px;top:407px">BLER</div><div class="r" style="left:700px;width:100px;top:407px">22</div><div class="r" style="left:760px;width:100px;top:407px">5176</div><div class="r" style="left:820px;width:100px;top:407px">1.08</div>
<div class="l" style="left:671px;top:421px">Jitter</div><div class="r" style="left:700px;width:100px;top:421px">10.0%</div><div class="r" style="left:760px;width:100px;top:421px">n/a</div><div class="r" style="left:820px;width:100px;top:421px">7.71%</div>

<!-- buttons -->
<div class="grp" style="left:664px;top:483px;width:311px;height:35px;border-color:#d5d2c0"></div>
<div class="btn" style="left:705px;top:489px;width:73px;height:21px">Copy</div>
<div class="btn" style="left:858px;top:491px;width:73px;height:21px">Close</div>

</div>
</body></html>
